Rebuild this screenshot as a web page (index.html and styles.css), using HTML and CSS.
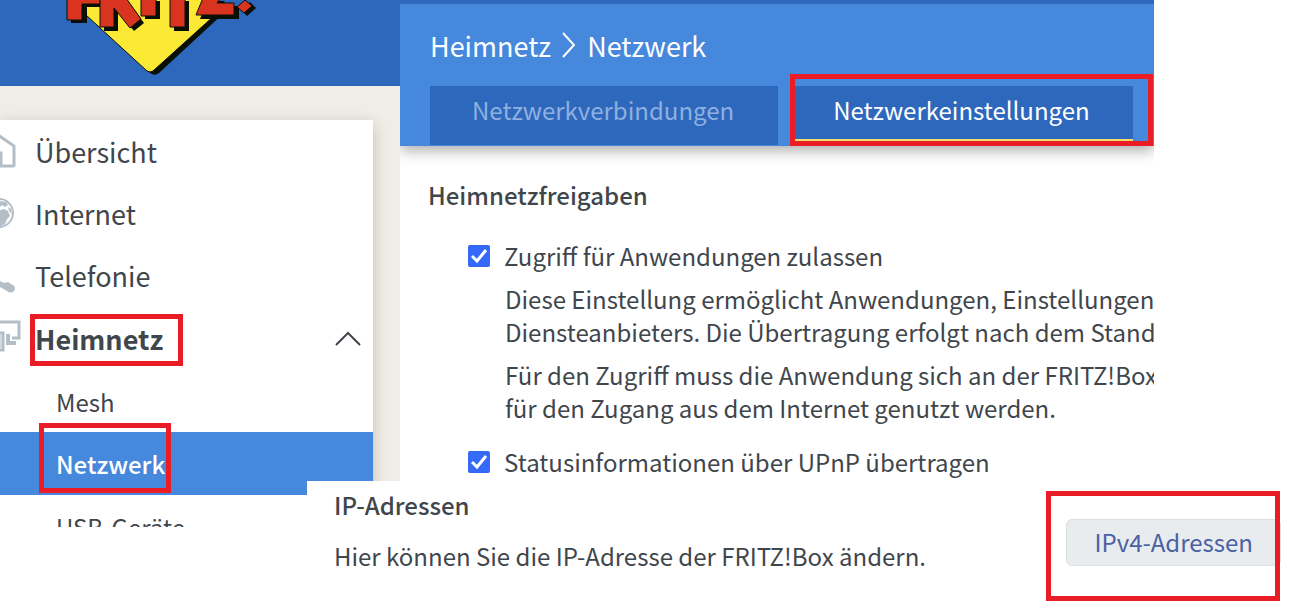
FILE: index.html
```
<!DOCTYPE html>
<html lang="de">
<head>
    <meta charset="UTF-8">
    <title>FRITZ!Box</title>
    <link rel="stylesheet" href="styles.css">
</head>
<body>
    <div class="router">
        <aside class="sidebar">
            <div class="brand">
                <svg class="logo" width="200" height="80" viewBox="60 0 200 80" role="img" aria-label="FRITZ!">
                    <path d="M88 14L149 72Q154 77 159 73L225 12Z" fill="#0a0f05"/>
                    <path d="M86 -2V15L147 71Q150 73 153 71L215 15V-2Z" fill="#fbe936" stroke="#0a0f05"/>
                    <g fill="#0a0f05" transform="translate(4 3)">
                        <path d="M67 -2V20H83V4H100V-2Z"/>
                        <path d="M100 -2V28H114V9L130 28L140 20L124 -2Z"/>
                        <path d="M141 -2H156V16H141Z"/>
                        <path d="M170 -2H185V28H170Z"/>
                        <path d="M203 -2L196 16H235V3H217L221 -2Z"/>
                        <path d="M237 7L246 -1L252 5L243 13Z"/>
                    </g>
                    <g fill="#d93420" stroke="#0a0f05">
                        <path d="M67 -2V20H82V4H100V-2Z"/>
                        <path d="M100 -2V27H114V8L130 28L141 19L126 -2Z"/>
                        <path d="M141 -2H156V16H141Z"/>
                        <path d="M170 -2H185V27H170Z"/>
                        <path d="M203 -2L196 15H234V3H217L221 -2Z"/>
                        <path d="M237 7L245 0L252 6L244 13Z"/>
                    </g>
                </svg>
            </div>
            <nav class="menu">
                <a class="menu-item" href="#">
                    <svg class="menu-icon" width="24" height="40" viewBox="0 0 24 40">
                        <path d="M-2 4L14 15V34Q14 35 13 35H1V22H-2" fill="none" stroke="#b4bec6" stroke-width="3"/>
                    </svg>
                    <span>Übersicht</span>
                </a>
                <a class="menu-item" href="#">
                    <svg class="menu-icon" width="24" height="40" viewBox="0 0 24 40">
                        <circle cx="-1" cy="20" r="14" fill="none" stroke="#b4bec6" stroke-width="2"/>
                        <path d="M0 8L6 9L8 12L5 14L2 12L0 14ZM0 17L4 16L8 18L10 23L7 26L5 31L1 33H0ZM8 14L11 16L12 21L9 18Z" fill="#b4bec6"/>
                    </svg>
                    <span>Internet</span>
                </a>
                <a class="menu-item" href="#">
                    <svg class="menu-icon" width="24" height="40" viewBox="0 0 24 40">
                        <path d="M0 26L4 28L8 27L14 31Q16 33 14 36Q11 39 7 36L0 32Z" fill="#b4bec6"/>
                    </svg>
                    <span>Telefonie</span>
                </a>
                <a class="menu-item open" href="#">
                    <svg class="menu-icon" width="24" height="40" viewBox="0 0 24 40">
                        <path d="M-2 4H19V20H12M-2 15H3V32H-2" fill="none" stroke="#b4bec6" stroke-width="3"/>
                        <path d="M6 16H10V23H16V27H6Z" fill="#b4bec6"/>
                        <path d="M0 17H2V30H0Z" fill="#d3d9dd"/>
                    </svg>
                    <span class="marked">Heimnetz<i class="mark mark-group"></i></span>
                    <svg class="arrow" width="26" height="16" viewBox="0 0 26 16">
                        <path d="M1 15L13 3L25 15" fill="none" stroke="#3f464c" stroke-width="2"/>
                    </svg>
                </a>
                <a class="sub-item" href="#">Mesh</a>
                <a class="sub-item active" href="#"><span class="marked">Netzwerk<i class="mark mark-page"></i></span></a>
                <a class="sub-item" href="#">USB-Geräte</a>
            </nav>
        </aside>

        <main class="content">
            <header class="page-head">
                <h1>
                    Heimnetz
                    <svg width="14" height="26" viewBox="0 0 14 26">
                        <path d="M1 1L12 13L1 25" fill="none" stroke="#fff" stroke-width="2"/>
                    </svg>
                    Netzwerk
                </h1>
                <div class="tabs">
                    <button class="tab" type="button">Netzwerkverbindungen</button>
                    <button class="tab selected" type="button">Netzwerkeinstellungen<i class="mark mark-tab"></i></button>
                </div>
            </header>
            <section class="shares">
                <h2>Heimnetzfreigaben</h2>
                <div class="option">
                    <input type="checkbox" id="apps" checked>
                    <label for="apps">Zugriff für Anwendungen zulassen</label>
                </div>
                <p>Diese Einstellung ermöglicht Anwendungen, Einstellungen<br>Diensteanbieters. Die Übertragung erfolgt nach dem Standard</p>
                <p>Für den Zugriff muss die Anwendung sich an der FRITZ!Box<br>für den Zugang aus dem Internet genutzt werden.</p>
                <div class="option">
                    <input type="checkbox" id="upnp" checked>
                    <label for="upnp">Statusinformationen über UPnP übertragen</label>
                </div>
            </section>
        </main>
    </div>

    <section class="addresses">
        <div class="address-text">
            <h2>IP-Adressen</h2>
            <p>Hier können Sie die IP-Adresse der FRITZ!Box ändern.</p>
        </div>
        <button class="address-button" type="button">IPv4-Adressen<i class="mark mark-button"></i></button>
    </section>
</body>
</html>
```
FILE: styles.css
```
* {
    box-sizing: border-box;
}

body {
    margin: 0;
    background-color: #fff;
    color: #3f464c;
    font-family: "Noto Sans CJK SC", "Noto Sans", sans-serif;
    font-size: 24px;
    line-height: 33px;
    overflow: hidden;
}

h1, h2, p {
    margin: 0;
}

a {
    color: inherit;
    text-decoration: none;
}

button {
    font: inherit;
    border: none;
    cursor: pointer;
}

.router {
    display: flex;
    align-items: flex-start;
    margin-right: 146px;
}

/* Sidebar */
.sidebar {
    flex: 0 0 400px;
    height: 527px;
    overflow: hidden;
    background-color: #f0ede6;
}

.brand {
    height: 86px;
    padding-left: 60px;
    background-color: #2d68bc;
}

.logo {
    display: block;
}

.menu {
    margin: 34px 27px 0 0;
    background-color: #fff;
    box-shadow: 0 4px 14px rgba(0, 0, 0, 0.2);
}

.menu-item {
    display: flex;
    align-items: center;
    height: 62px;
    padding-right: 12px;
    font-size: 27px;
}

.menu-icon {
    flex: none;
    margin-right: 11px;
}

.menu-item.open {
    height: 64px;
    font-weight: bold;
}

.arrow {
    margin-left: auto;
}

.sub-item {
    display: flex;
    align-items: center;
    height: 62px;
    padding-left: 56px;
}

.sub-item.active {
    height: 63px;
    background-color: #4688dc;
    color: #fff;
    font-weight: 500;
}

/* Content */
.content {
    flex: 1;
    min-width: 0;
    height: 481px;
    overflow: hidden;
    position: relative;
    border-top: 4px solid #2d68bc;
    background-color: #fff;
    white-space: nowrap;
}

.page-head {
    padding: 20px 0 1px 30px;
    background-color: #4688dc;
    color: #fff;
    box-shadow: 0 4px 14px rgba(0, 0, 0, 0.35);
}

h1 {
    display: flex;
    align-items: center;
    gap: 11px;
    height: 42px;
    font-size: 27px;
    font-weight: normal;
}

.tabs {
    display: flex;
    gap: 17px;
    margin-top: 20px;
}

.tab {
    position: relative;
    height: 59px;
    padding: 0 44px 12px 42px;
    background-color: #2d68bc;
    color: #8fb0e0;
}

.tab.selected {
    padding: 0 43px 6px 38px;
    border-bottom: 6px solid #f3dc6e;
    color: #fff;
}

.shares {
    padding: 32px 0 0 28px;
}

h2 {
    font-size: 24px;
    font-weight: 500;
}

.option {
    display: flex;
    align-items: center;
    gap: 14px;
    margin: 21px 0 10px 40px;
}

h2 + .option {
    margin-top: 28px;
}

.option input {
    appearance: none;
    width: 22px;
    height: 22px;
    margin: 0;
    border-radius: 2px;
    background: #356af8 url("data:image/svg+xml,%3Csvg xmlns='http://www.w3.org/2000/svg' viewBox='0 0 22 22'%3E%3Cpath d='M4 11L9 16L18 5' fill='none' stroke='white' stroke-width='3'/%3E%3C/svg%3E");
}

.shares p {
    margin: 0 0 10px 77px;
}

/* IP addresses */
.addresses {
    position: relative;
    display: flex;
    align-items: center;
    justify-content: space-between;
    min-height: 120px;
    margin: -46px 0 0 307px;
    padding: 7px 19px 4px 27px;
    background-color: #fff;
}

.address-text {
    align-self: flex-start;
}

.address-text p {
    margin-top: 18px;
}

.address-button {
    position: relative;
    height: 47px;
    padding: 0 27px 2px;
    border: 1px solid #dadfe2;
    border-radius: 6px;
    background-color: #e8ecef;
    color: #4a62a3;
}

/* Red highlight frames */
.marked {
    position: relative;
}

.mark {
    position: absolute;
    border: 5px solid #ea1c26;
    pointer-events: none;
}

.mark-group {
    inset: -8px -20px -11px -5px;
}

.mark-page {
    inset: -24px -6px -13px -17px;
}

.mark-tab {
    inset: -12px -20px -7px -5px;
}

.mark-button {
    inset: -29px 0 -36px -21px;
}
```
